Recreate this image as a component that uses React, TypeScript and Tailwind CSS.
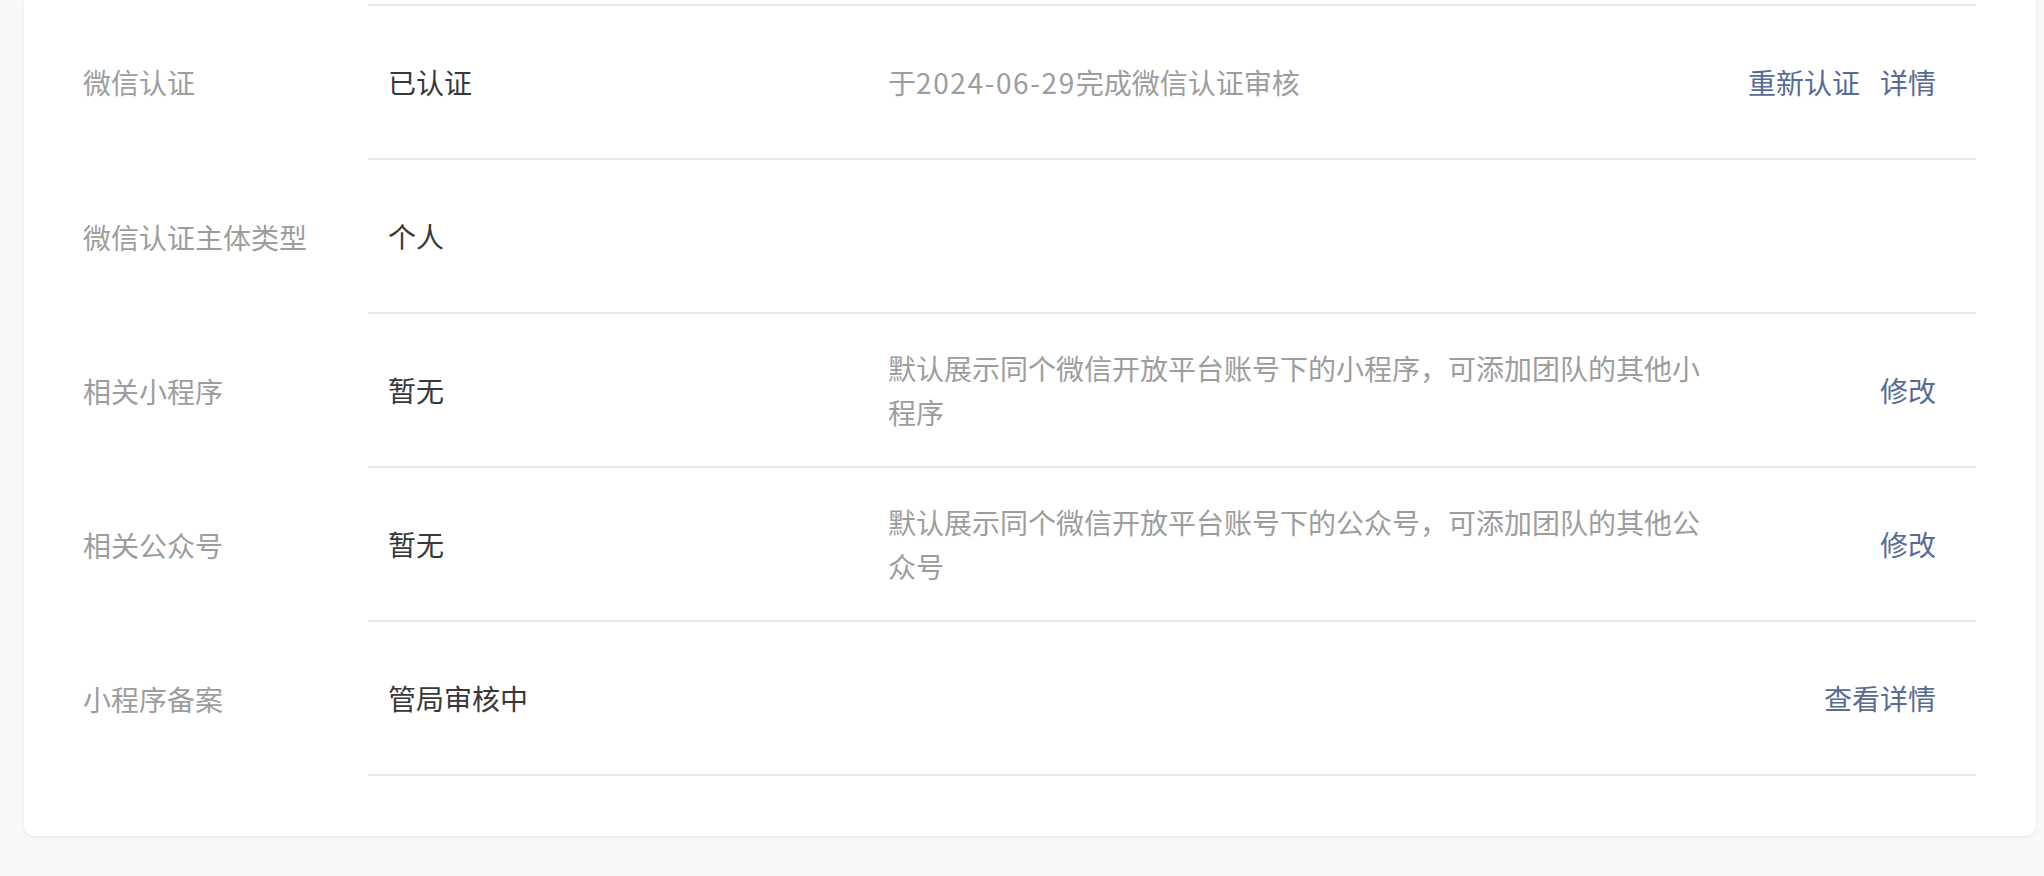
import React from "react";

interface Row {
    label: string;
    value: string;
    desc?: React.ReactNode;
    actions?: string[];
}

const rows: Row[] = [
    {
        label: "微信认证",
        value: "已认证",
        desc: (
            <>
                于<span className="tracking-[1.6px]">2024-06-29</span>完成微信认证审核
            </>
        ),
        actions: ["重新认证", "详情"],
    },
    { label: "微信认证主体类型", value: "个人" },
    {
        label: "相关小程序",
        value: "暂无",
        desc: "默认展示同个微信开放平台账号下的小程序，可添加团队的其他小程序",
        actions: ["修改"],
    },
    {
        label: "相关公众号",
        value: "暂无",
        desc: "默认展示同个微信开放平台账号下的公众号，可添加团队的其他公众号",
        actions: ["修改"],
    },
    { label: "小程序备案", value: "管局审核中", actions: ["查看详情"] },
];

export default function App() {
    return (
        <div
            className="w-[2044px] h-[876px] overflow-hidden bg-[#f7f8fa] text-[28px]"
            style={{ fontFamily: '"Noto Sans CJK SC", "Noto Sans", sans-serif' }}
        >
            <div className="ml-[24px] w-[2012px] bg-white rounded-b-[10px] shadow-[0_1px_3px_rgba(0,0,0,0.08)] pl-[59px] pr-[60px] pt-[4px] pb-[60px]">
                {rows.map((r, i) => (
                    <div key={r.label} className="flex">
                        <div className="w-[285px] shrink-0 flex items-center text-[#9d9d9d]">{r.label}</div>
                        <div
                            className={
                                "flex-1 flex items-center border-b-2 border-[#e6e6eb] " +
                                (i === 0 ? "border-t-2 h-[156px]" : "h-[154px]")
                            }
                        >
                            <div className="w-[520px] shrink-0 pl-[20px] text-[#383838]">{r.value}</div>
                            <div className="w-[820px] shrink-0 leading-[44px] text-[#9d9d9d]">{r.desc}</div>
                            <div className="flex-1 flex justify-end gap-[20px] pr-[40px] text-[#576b95]">
                                {r.actions?.map((a) => (
                                    <span key={a} className="cursor-pointer">
                                        {a}
                                    </span>
                                ))}
                            </div>
                        </div>
                    </div>
                ))}
            </div>
        </div>
    );
}
